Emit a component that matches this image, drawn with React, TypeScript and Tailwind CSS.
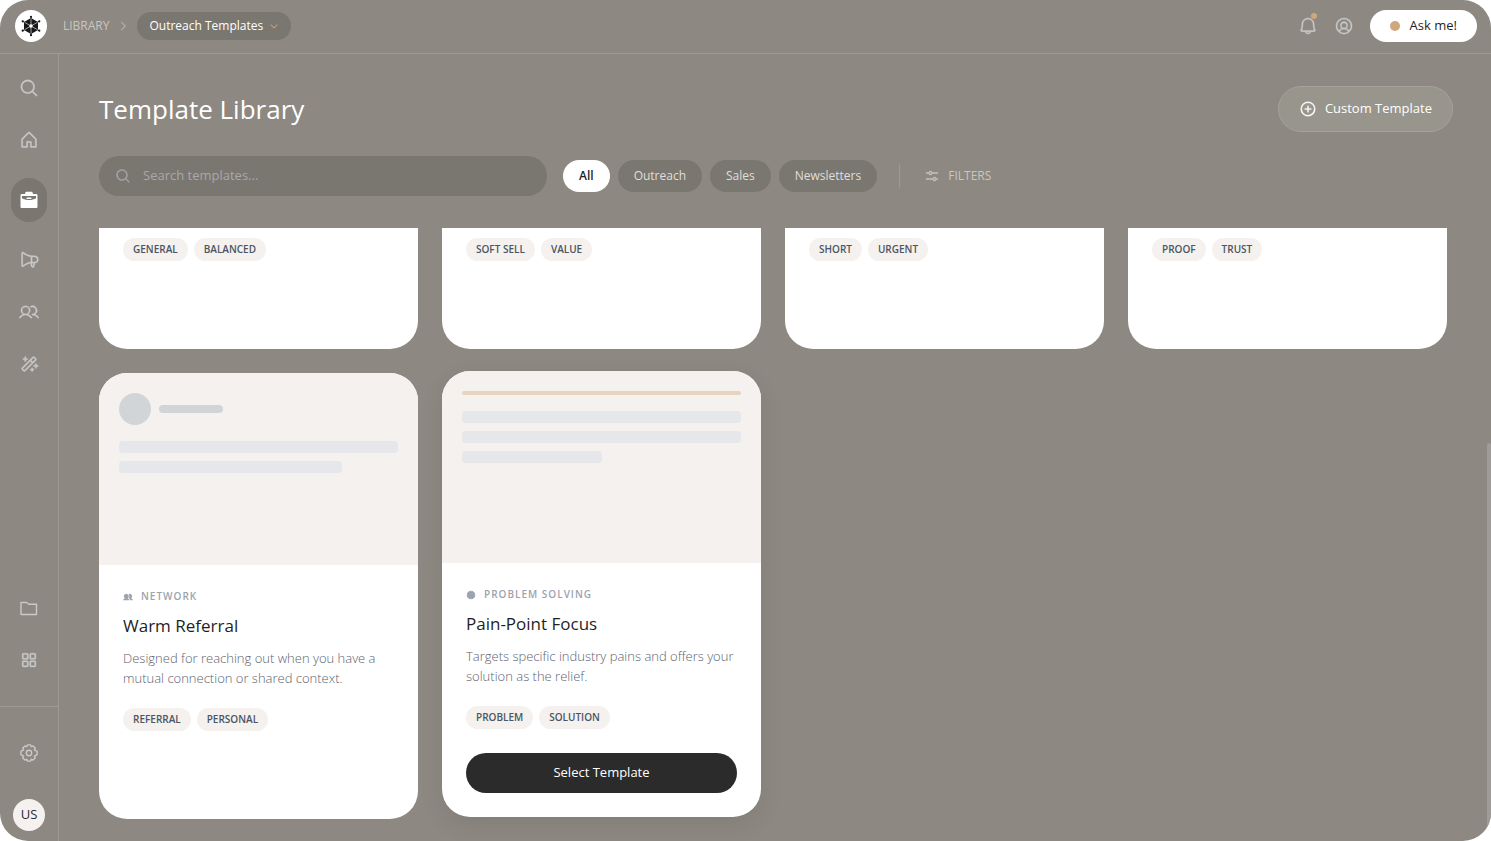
import type { ReactNode } from "react";
import {
  PiBell,
  PiCaretDownBold,
  PiCaretRight,
  PiHouse,
  PiMagicWand,
  PiMagnifyingGlass,
  PiMegaphone,
  PiPlusCircle,
  PiSlidersHorizontal,
  PiSquaresFour,
  PiUserCircle,
  PiUsers,
  PiUsersFill,
} from "react-icons/pi";

type IconProps = { className?: string; strokeWidth?: number };

function BriefcaseIcon({ className }: IconProps) {
  return (
    <svg viewBox="0 0 20 20" className={className} fill="currentColor" aria-hidden="true">
      <path d="M6.2 4V3.2c0-.8.6-1.4 1.4-1.4h4.8c.8 0 1.4.6 1.4 1.4V4h3.4c.7 0 1.3.6 1.3 1.3v11.400c0 .7-.6 1.300-1.300 1.300H2.800c-.7 0-1.300-.6-1.300-1.300V5.300C1.500 4.600 2.100 4 2.800 4z" />
      <path d="M2.900 6h14.200v2.200c-2.100 1.200-4.500 1.800-7.100 1.800S5 9.400 2.900 8.200z" fill="#7a7670" />
      <rect x="7.500" y="7.600" width="5" height="1.500" rx="0.7" />
    </svg>
  );
}

function FolderIcon({ className }: IconProps) {
  return (
    <svg viewBox="0 0 20 20" className={className} fill="none" stroke="currentColor" strokeWidth="1.4" strokeLinejoin="round" aria-hidden="true">
      <path d="M2 16.500V4.500h5.600l2.200 1.700h7.700v10.300z" />
    </svg>
  );
}

function GearIcon({ className }: IconProps) {
  return (
    <svg viewBox="0 0 20 20" className={className} fill="none" stroke="currentColor" strokeWidth="1.4" strokeLinejoin="round" aria-hidden="true">
      <circle cx="10" cy="10" r="2.700" />
      <path d="M8.400 1.900h3.200l.6 1.800 1.800-.8 2.200 2.200-.8 1.700 2.700 1.600v3.200l-2.700 1.600.8 1.700-2.200 2.200-1.800-.8-.6 1.800H8.400l-.6-1.800-1.800.8-2.200-2.200.8-1.700-2.700-1.600V8.400l2.700-1.600-.8-1.700L6 2.900l1.800.8z" />
    </svg>
  );
}

function TargetIcon({ className }: IconProps) {
  return (
    <svg viewBox="0 0 10 10" className={className} aria-hidden="true">
      <circle cx="5" cy="5" r="4.300" fill="currentColor" />
      <path d="M5 .5v1.500M5 8v1.500M.5 5H2M8 5h1.500" stroke="#fff" strokeOpacity="0.4" strokeWidth="0.7" />
    </svg>
  );
}

const mainNav = [
  { label: "Search", icon: PiMagnifyingGlass },
  { label: "Home", icon: PiHouse },
  { label: "Library", icon: BriefcaseIcon, active: true },
  { label: "Campaigns", icon: PiMegaphone },
  { label: "Contacts", icon: PiUsers },
  { label: "Magic tools", icon: PiMagicWand },
];

const secondaryNav = [
  { label: "Files", icon: FolderIcon },
  { label: "Apps", icon: PiSquaresFour },
];

const categories = ["All", "Outreach", "Sales", "Newsletters"];

const scrolledCards = [
  ["GENERAL", "BALANCED"],
  ["SOFT SELL", "VALUE"],
  ["SHORT", "URGENT"],
  ["PROOF", "TRUST"],
];

function Logo() {
  return (
    <svg viewBox="0 0 32 32" className="size-8" aria-hidden="true">
      <circle cx="16" cy="16" r="16" fill="#fff" />
      <path d="M16 8l7 4v8l-7 4-7-4v-8z" fill="#171717" />
      <path d="M16 6.500v3M16 22.500v3M7.500 11.200l3 1.600M24.500 11.200l-3 1.600M7.500 20.800l3-1.600M24.500 20.800l-3-1.600" stroke="#171717" strokeWidth="1" />
      <path d="M16 8.500v15M9.500 12.300l13 7.400M22.500 12.300l-13 7.400" stroke="#fff" strokeWidth="0.6" />
      <circle cx="16" cy="16" r="1.700" fill="#fff" />
      <g fill="#171717">
        <circle cx="16" cy="6.800" r="1.100" />
        <circle cx="16" cy="25.200" r="1.100" />
        <circle cx="7.700" cy="11.300" r="1.100" />
        <circle cx="24.300" cy="11.300" r="1.100" />
        <circle cx="7.700" cy="20.700" r="1.100" />
        <circle cx="24.300" cy="20.700" r="1.100" />
      </g>
    </svg>
  );
}

function Header() {
  return (
    <header className="flex shrink-0 items-center justify-between border-b border-[#9d9993] pb-[11px] pl-[15px] pr-[14px] pt-[10px]">
      <div className="flex items-center">
        <Logo />
        <a href="#library" className="ml-4 text-xs text-[#c9c6c2]">LIBRARY</a>
        <PiCaretRight strokeWidth={6} className="mx-2 size-3 text-[#bdbab6]" />
        <button className="flex h-7 items-center gap-[6px] rounded-full bg-[#7a7670] px-3 text-xs text-white">
          Outreach Templates
          <PiCaretDownBold className="size-[10px] text-[#d0a67d]" />
        </button>
      </div>
      <div className="flex items-center gap-4">
        <button aria-label="Notifications" className="relative text-[#c9c9c9]">
          <PiBell strokeWidth={5} className="size-5" />
          <span className="absolute -top-[3px] right-[1px] size-[6px] rounded-full bg-[#d0a67d]" />
        </button>
        <button aria-label="Account" className="text-[#c9c9c9]">
          <PiUserCircle strokeWidth={5} className="size-5" />
        </button>
        <button className="flex h-8 items-center gap-[10px] rounded-full bg-white px-5 text-[13px] text-[#1f1f1f]">
          <span className="size-[10px] rounded-full bg-[#d0a67d]" />
          Ask me!
        </button>
      </div>
    </header>
  );
}

function Sidebar() {
  return (
    <aside className="flex shrink-0 flex-col justify-between border-r border-[#9d9993] pb-[10px] pt-3">
      <nav className="flex flex-col items-center gap-2 text-[#c9c9c9]">
        {mainNav.map(({ label, icon: Icon, active }) => (
          <button
            key={label}
            aria-label={label}
            className={
              active
                ? "my-2 flex h-11 w-9 items-center justify-center rounded-full bg-[#7a7670] text-white"
                : "flex h-11 w-9 items-center justify-center"
            }
          >
            <Icon strokeWidth={5} className="size-5" />
          </button>
        ))}
      </nav>
      <div className="flex flex-col items-center text-[#c9c9c9]">
        <nav className="flex flex-col gap-2 pb-6">
          {secondaryNav.map(({ label, icon: Icon }) => (
            <button key={label} aria-label={label} className="flex h-11 w-9 items-center justify-center">
              <Icon strokeWidth={5} className="size-5" />
            </button>
          ))}
        </nav>
        <div className="flex flex-col items-center gap-6 border-t border-[#9d9993] px-[11px] pt-6">
          <button aria-label="Settings" className="flex h-11 w-9 items-center justify-center">
            <GearIcon className="size-5" />
          </button>
          <button className="size-8 rounded-full bg-[#f4f1ee] text-[13px] text-[#1f2937]">US</button>
        </div>
      </div>
    </aside>
  );
}

function Tags({ items }: { items: string[] }) {
  return (
    <ul className="flex gap-[6px]">
      {items.map((tag) => (
        <li key={tag} className="rounded-full bg-[#f4f1ee] px-[10px] py-1 text-[10px] font-semibold leading-[15px] text-[#4b5563]">
          {tag}
        </li>
      ))}
    </ul>
  );
}

type TemplateCardProps = {
  preview: ReactNode;
  icon: ReactNode;
  category: string;
  title: string;
  description: string;
  tags: string[];
  selected?: boolean;
};

function TemplateCard({ preview, icon, category, title, description, tags, selected }: TemplateCardProps) {
  return (
    <article
      className={
        selected
          ? "-translate-y-0.5 overflow-hidden rounded-[28px] bg-white shadow-[0_8px_24px_rgba(0,0,0,0.08)]"
          : "overflow-hidden rounded-[28px] bg-white"
      }
    >
      <div className="h-48 bg-[#f4f1ee] p-5">{preview}</div>
      <div className="p-6">
        <p className="flex items-center gap-2 text-[10px] font-semibold leading-[15px] tracking-widest text-[#9ca3af]">
          {icon}
          {category}
        </p>
        <h2 className="mt-2 text-[17px] leading-7 text-[#1f1f1f]">{title}</h2>
        <p className="mt-2 text-[13px] font-light leading-5 text-[#5b6370]">{description}</p>
        <div className="mt-5">
          <Tags items={tags} />
        </div>
        {selected && (
          <button className="mt-6 h-10 w-full rounded-full bg-[#2b2b2b] text-[13px] font-medium text-white">
            Select Template
          </button>
        )}
      </div>
    </article>
  );
}

export default function App() {
  return (
    <div className="flex h-screen flex-col overflow-hidden rounded-[28px] bg-[#8d8881] font-['Open_Sans','Noto_Sans',sans-serif]">
      <Header />
      <div className="flex min-h-0 flex-1">
        <Sidebar />
        <main className="relative flex min-w-0 flex-1 flex-col pt-8">
          <div className="flex items-center justify-between pl-10 pr-[38px]">
            <h1 className="text-[26px] leading-9 text-white">Template Library</h1>
            <button className="flex h-[46px] items-center gap-2 rounded-full border border-[#a5a29d] bg-[#98958c] px-5 text-[13px] font-medium text-white">
              <PiPlusCircle strokeWidth={5} className="size-[18px]" />
              Custom Template
            </button>
          </div>

          <div className="mt-6 flex items-center gap-4 px-10">
            <label className="flex h-10 w-full max-w-md items-center gap-3 rounded-full bg-[#7a7670] px-4 text-[#a9a8ad]">
              <PiMagnifyingGlass strokeWidth={6} className="size-4 shrink-0" />
              <input
                type="search"
                aria-label="Search templates"
                placeholder="Search templates..."
                className="w-full bg-transparent text-[13px] outline-none placeholder:text-[#a9a8ad]"
              />
            </label>
            <div className="flex gap-2 text-xs">
              {categories.map((name) => (
                <button
                  key={name}
                  className={
                    name === "All"
                      ? "h-8 rounded-full bg-white px-4 font-semibold text-[#1f1f1f]"
                      : "h-8 rounded-full bg-[#7a7670] px-4 text-[#e0dedb]"
                  }
                >
                  {name}
                </button>
              ))}
            </div>
            <span className="ml-[6px] h-6 w-px bg-[#9d9993]" />
            <button className="ml-2 flex items-center gap-2 text-xs text-[#c9c6c2]">
              <PiSlidersHorizontal strokeWidth={6} className="size-4" />
              FILTERS
            </button>
          </div>

          {/* Template grid */}
          <div className="mt-8 grid min-h-0 flex-1 grid-cols-4 content-start gap-6 overflow-hidden pl-10 pr-11">
            {scrolledCards.map((tags) => (
              <article key={tags[0]} className="h-[121px] rounded-b-[28px] bg-white px-6 pt-[10px]">
                <Tags items={tags} />
              </article>
            ))}
            <TemplateCard
              preview={
                <>
                  <div className="flex items-center gap-2">
                    <div className="size-8 rounded-full bg-[#d1d5d8]" />
                    <div className="h-2 w-16 rounded-full bg-[#d1d5d8]" />
                  </div>
                  <div className="mt-4 h-3 rounded bg-[#e5e7eb]" />
                  <div className="mt-2 h-3 w-4/5 rounded bg-[#e5e7eb]" />
                </>
              }
              icon={<PiUsersFill className="size-[10px]" />}
              category="NETWORK"
              title="Warm Referral"
              description="Designed for reaching out when you have a mutual connection or shared context."
              tags={["REFERRAL", "PERSONAL"]}
            />
            <TemplateCard
              selected
              preview={
                <>
                  <div className="h-1 rounded-full bg-[#e8d4bd]" />
                  <div className="mt-4 h-3 rounded bg-[#e5e7eb]" />
                  <div className="mt-2 h-3 rounded bg-[#e5e7eb]" />
                  <div className="mt-2 h-3 w-1/2 rounded bg-[#e5e7eb]" />
                </>
              }
              icon={<TargetIcon className="size-[10px]" />}
              category="PROBLEM SOLVING"
              title="Pain-Point Focus"
              description="Targets specific industry pains and offers your solution as the relief."
              tags={["PROBLEM", "SOLUTION"]}
            />
          </div>

          {/* Scroll thumb */}
          <div className="absolute bottom-0 right-0 h-[398px] w-1 rounded-t bg-[#9f9b98]" />
        </main>
      </div>
    </div>
  );
}
